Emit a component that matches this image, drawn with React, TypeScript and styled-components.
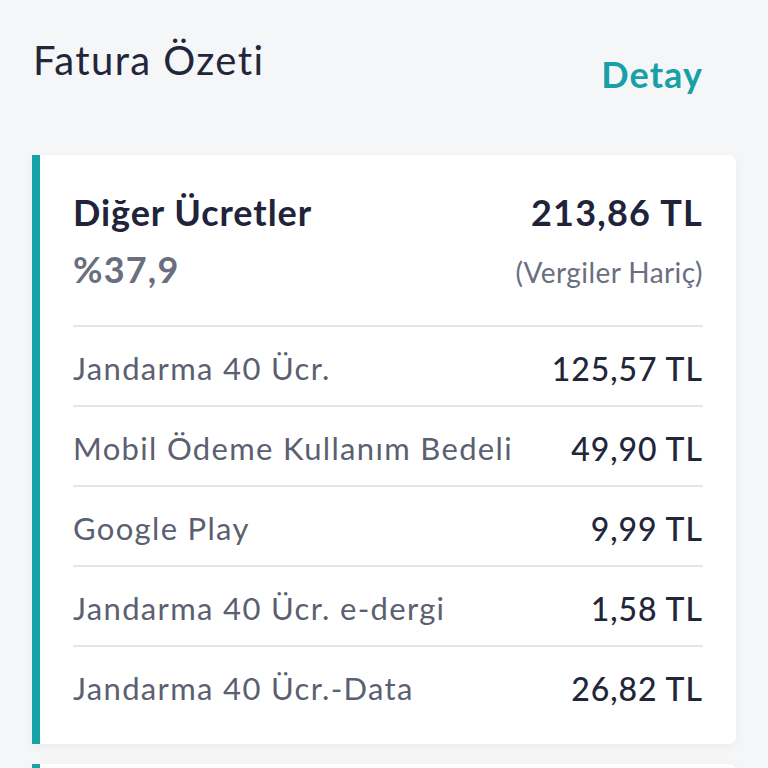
import React from "react";
import styled, { createGlobalStyle } from "styled-components";

const GlobalStyle = createGlobalStyle`
  html, body {
    margin: 0;
    padding: 0;
    background: #f5f6f8;
  }
  body {
    font-family: "Lato", "Noto Sans", sans-serif;
    -webkit-font-smoothing: antialiased;
  }
`;

const Page = styled.div`
  width: 768px;
  height: 768px;
  overflow: hidden;
  box-sizing: border-box;
  padding: 36px 65px 0 32px;
  background: #f5f6f8;
`;

const Header = styled.header`
  display: flex;
  justify-content: space-between;
  align-items: flex-start;
  padding-left: 1px;
`;

const Title = styled.h1`
  margin: 0;
  font-size: 40px;
  line-height: 48px;
  font-weight: 400;
  color: #23263a;
  letter-spacing: 0.035em;
`;

const DetailLink = styled.a`
  margin-top: 16px;
  font-size: 36px;
  line-height: 44px;
  font-weight: 700;
  color: #17a0a8;
  text-decoration: none;
  letter-spacing: 0.03em;
`;

const Card = styled.section<{ $first?: boolean }>`
  margin-top: ${(p) => (p.$first ? "59px" : "20px")};
  margin-right: -33px;
  background: #ffffff;
  border-left: 8px solid #17a2a8;
  border-radius: 0 7px 7px 0;
  box-shadow: 0 3px 10px rgba(30, 40, 60, 0.05);
  padding: 0 33px 19px 33px;
`;

const Summary = styled.div`
  padding: 35px 0 31px;
  display: flex;
  flex-direction: column;
  gap: 13px;
`;

const SummaryRow = styled.div`
  display: flex;
  justify-content: space-between;
  align-items: baseline;
  line-height: 44px;
`;

const CategoryName = styled.span`
  font-size: 36px;
  font-weight: 700;
  color: #20233a;
  letter-spacing: 0.026em;
`;

const TotalAmount = styled.span`
  font-size: 36px;
  font-weight: 700;
  color: #20233a;
  letter-spacing: 0.035em;
`;

const Percent = styled.span`
  font-size: 36px;
  font-weight: 700;
  color: #6a6f80;
  letter-spacing: 0.033em;
`;

const TaxNote = styled.span`
  font-size: 28px;
  font-weight: 400;
  color: #6a6f80;
  letter-spacing: 0.015em;
`;

const ItemRow = styled.div`
  display: flex;
  justify-content: space-between;
  align-items: center;
  height: 80px;
  padding-top: 4px;
  box-sizing: border-box;
  border-top: 2px solid #e4e6ea;
`;

const ItemLabel = styled.span`
  font-size: 31px;
  font-weight: 400;
  color: #5b6071;
  letter-spacing: 0.043em;
`;

const ItemValue = styled.span`
  font-size: 32px;
  font-weight: 500;
  color: #23263a;
  letter-spacing: 0.03em;
`;

const items = [
  { label: "Jandarma 40 Ücr.", value: "125,57 TL" },
  { label: "Mobil Ödeme Kullanım Bedeli", value: "49,90 TL" },
  { label: "Google Play", value: "9,99 TL" },
  { label: "Jandarma 40 Ücr. e-dergi", value: "1,58 TL" },
  { label: "Jandarma 40 Ücr.-Data", value: "26,82 TL" },
];

export default function App() {
  return (
    <>
      <GlobalStyle />
      <Page>
        <Header>
          <Title>Fatura Özeti</Title>
          <DetailLink href="#">Detay</DetailLink>
        </Header>
        <Card $first>
          <Summary>
            <SummaryRow>
              <CategoryName>Diğer Ücretler</CategoryName>
              <TotalAmount>213,86 TL</TotalAmount>
            </SummaryRow>
            <SummaryRow>
              <Percent>%37,9</Percent>
              <TaxNote>(Vergiler Hariç)</TaxNote>
            </SummaryRow>
          </Summary>
          {items.map((it) => (
            <ItemRow key={it.label}>
              <ItemLabel>{it.label}</ItemLabel>
              <ItemValue>{it.value}</ItemValue>
            </ItemRow>
          ))}
        </Card>
        <Card>
          <Summary>
            <SummaryRow>
              <CategoryName>&nbsp;</CategoryName>
            </SummaryRow>
          </Summary>
        </Card>
      </Page>
    </>
  );
}
